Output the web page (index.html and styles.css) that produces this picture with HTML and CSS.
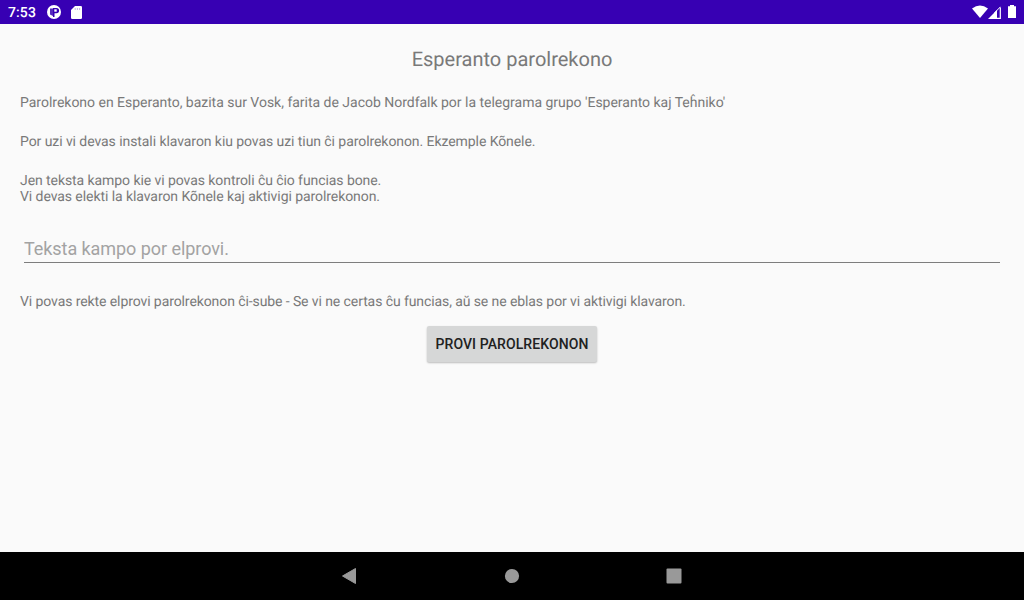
FILE: index.html
```html
<!DOCTYPE html>
<html lang="eo">
<head>
<meta charset="utf-8">
<title>Esperanto parolrekono</title>
<link rel="stylesheet" href="styles.css">
</head>
<body>
<header class="status">
  <span class="clock">7:53</span>
  <svg class="notif" width="14" height="14" viewBox="0 0 14 14"><circle cx="7" cy="7" r="7" fill="#fff"/><path d="M3 3.500H6V11L3 9.500z" fill="#3700b3" opacity=".85"/><path d="M6 3h3.500a2.300 2.300 0 0 1 0 5.200H7.500V12H6z" fill="#3700b3"/><path d="M7.300 4.300h2.400v2.400H7.300z" fill="#fff"/></svg>
  <svg class="card" width="11" height="13" viewBox="0 0 11 13"><path d="M4 0h5.700Q11 0 11 1.300V11.700Q11 13 9.700 13H1.300Q0 13 0 11.700V4z" fill="#fff"/><path d="M4.200 2v2M6.400 2v2M8.600 2v2" stroke="#3700b3" stroke-opacity=".3"/></svg>
  <svg class="wifi" width="16" height="13" viewBox="0 0 16 13"><path d="M0 3.500Q8-2.500 16 3.500L8 13z" fill="#fff"/></svg>
  <svg class="cell" width="13" height="13" viewBox="0 0 13 13"><path d="M12.300 1.500V12.300H8" fill="none" stroke="#fff" stroke-width="1.200"/><path d="M12.500 .8 6.500 6.800" fill="none" stroke="#fff"/><path d="M9 4V13H0z" fill="#fff"/></svg>
  <svg class="battery" width="8" height="13" viewBox="0 0 8 13"><path d="M2 0h4v1.300H8V13H0V1.300h2z" fill="#fff"/></svg>
</header>
<main class="content">
  <h1 class="title">Esperanto parolrekono</h1>
  <p class="text intro">Parolrekono en Esperanto, bazita sur Vosk, farita de Jacob Nordfalk por la telegrama grupo 'Esperanto kaj Teĥniko'</p>
  <p class="text">Por uzi vi devas instali klavaron kiu povas uzi tiun ĉi parolrekonon. Ekzemple Kõnele.</p>
  <p class="text">Jen teksta kampo kie vi povas kontroli ĉu ĉio funcias bone.<br>Vi devas elekti la klavaron Kõnele kaj aktivigi parolrekonon.</p>
  <input class="field" placeholder="Teksta kampo por elprovi.">
  <p class="text direct">Vi povas rekte elprovi parolrekonon ĉi-sube - Se vi ne certas ĉu funcias, aŭ se ne eblas por vi aktivigi klavaron.</p>
  <button class="button">PROVI PAROLREKONON</button>
</main>
<nav class="nav">
  <svg class="back" width="16" height="18" viewBox="0 0 16 18"><path d="M1.500 9 14.500 1.500v15z" fill="#999" stroke="#999" stroke-linejoin="round"/></svg>
  <svg width="16" height="16" viewBox="0 0 16 16"><circle cx="8" cy="8" r="7.100" fill="#999"/></svg>
  <svg width="16" height="16" viewBox="0 0 16 16"><rect x=".5" y=".5" width="15" height="15" rx="1" fill="#999"/></svg>
</nav>
</body>
</html>
```
FILE: styles.css
```css
* { box-sizing: border-box; }
body { margin: 0; height: 600px; display: flex; flex-direction: column; background: #fafafa; font-family: Roboto, sans-serif; overflow: hidden; text-rendering: geometricPrecision; }
.status { height: 24px; flex: none; display: flex; align-items: center; padding: 0 8px; background: #3700b3; color: #fff; }
.clock { width: 39px; padding-top: 1px; font-size: 14px; font-weight: 500; letter-spacing: .1px; }
.card { margin-left: 10px; }
.wifi { margin-left: auto; margin-top: -1px; }
.battery { margin-left: 7px; margin-top: -2px; }
.content { flex: 1; display: flex; flex-direction: column; padding: 20px; color: #797979; }
.title { margin: 2px 0 22px; font-size: 20px; font-weight: 400; line-height: 27px; text-align: center; }
.text { margin: 0 0 23px; font-size: 14px; line-height: 16px; letter-spacing: -.072px; white-space: nowrap; }
.intro { letter-spacing: -.015px; }
.direct { letter-spacing: -.092px; }
.field { margin: 5px 4px 31px; height: 30px; padding: 2px 0 0; border: 0; border-bottom: 1px solid #7d7d7d; background: none; font: 18px Roboto, sans-serif; letter-spacing: -.06px; outline: 0; }
.field::placeholder { color: #a3a3a3; opacity: 1; }
.button { align-self: center; margin: -7px 1px 0 0; width: 170px; height: 36px; padding: 0 0 0 1px; border: 0; border-radius: 2px; background: #d6d7d7; color: #212121; font: 500 14px Roboto, sans-serif; letter-spacing: .09px; box-shadow: 0 1px 2px rgba(0,0,0,.25); }
.nav { height: 48px; flex: none; display: flex; justify-content: center; align-items: center; gap: 146px; background: #000; }
.back { margin-right: 1px; margin-left: -1px; }
```
